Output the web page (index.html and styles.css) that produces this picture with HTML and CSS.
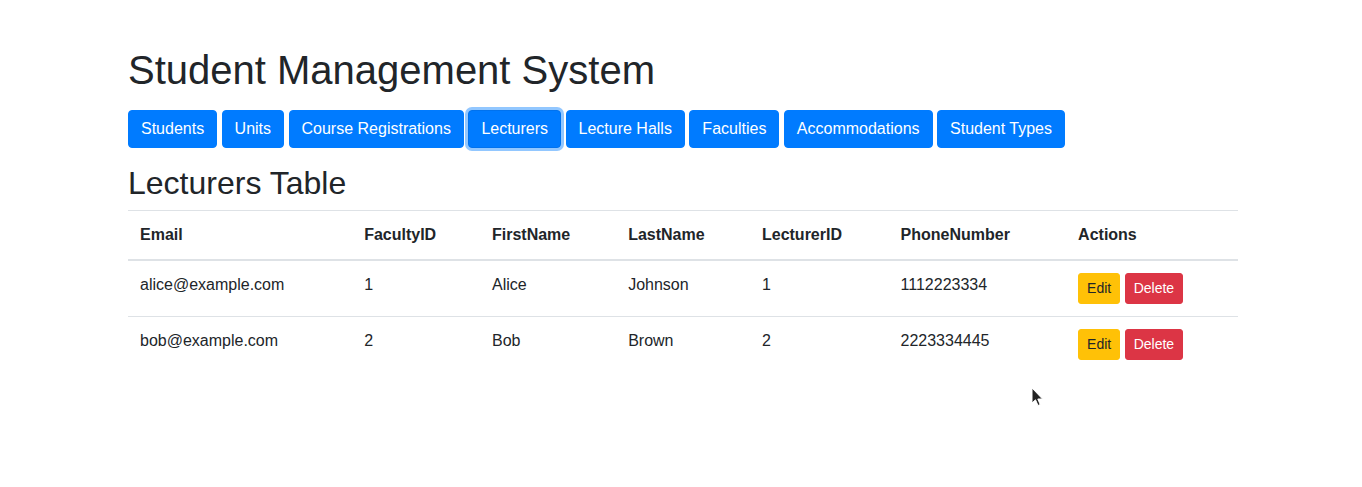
FILE: index.html
```html
<!DOCTYPE html>
<html lang="en">
<head>
<meta charset="utf-8">
<title>Student Management System</title>
<link rel="stylesheet" href="styles.css">
</head>
<body>
<div class="container">
  <h1 class="title">Student Management System</h1>
  <div class="nav">
    <button class="btn btn-primary">Students</button>
    <button class="btn btn-primary">Units</button>
    <button class="btn btn-primary">Course Registrations</button>
    <button class="btn btn-primary is-focus">Lecturers</button>
    <button class="btn btn-primary">Lecture Halls</button>
    <button class="btn btn-primary">Faculties</button>
    <button class="btn btn-primary">Accommodations</button>
    <button class="btn btn-primary">Student Types</button>
  </div>
  <h2 class="subtitle">Lecturers Table</h2>
  <table class="table">
    <thead>
      <tr>
        <th>Email</th>
        <th>FacultyID</th>
        <th>FirstName</th>
        <th>LastName</th>
        <th>LecturerID</th>
        <th>PhoneNumber</th>
        <th>Actions</th>
      </tr>
    </thead>
    <tbody>
      <tr>
        <td>alice@example.com</td>
        <td>1</td>
        <td>Alice</td>
        <td>Johnson</td>
        <td>1</td>
        <td>1112223334</td>
        <td><button class="btn btn-sm btn-warning">Edit</button> <button class="btn btn-sm btn-danger">Delete</button></td>
      </tr>
      <tr>
        <td>bob@example.com</td>
        <td>2</td>
        <td>Bob</td>
        <td>Brown</td>
        <td>2</td>
        <td>2223334445</td>
        <td><button class="btn btn-sm btn-warning">Edit</button> <button class="btn btn-sm btn-danger">Delete</button></td>
      </tr>
    </tbody>
  </table>
</div>
<svg class="cursor" width="14" height="22" viewBox="0 0 14 22" aria-hidden="true">
  <path d="M1 1 L1 16 L4.5 12.8 L7 18.5 L9.2 17.5 L6.8 12 L11.5 12 Z" fill="#222" stroke="#fff" stroke-width="1"/>
</svg>
</body>
</html>
```

FILE: styles.css
```css
html, body {
  margin: 0;
  padding: 0;
}
body {
  font-family: "Liberation Sans", Arial, Helvetica, sans-serif;
  font-size: 16px;
  line-height: 1.5;
  color: #212529;
  background: #fff;
  position: relative;
  min-height: 487px;
}
.container {
  width: 1110px;
  margin: 0 auto 0 128px;
  padding-top: 46px;
}
.title {
  font-size: 40px;
  font-weight: 500;
  line-height: 1.2;
  margin: 0;
}
.nav {
  margin-top: 16px;
  margin-bottom: 16px;
}
.btn {
  display: inline-block;
  font-family: inherit;
  font-weight: 400;
  font-size: 16px;
  line-height: 1.5;
  padding: 6px 12px;
  border: 1px solid transparent;
  border-radius: 4px;
  vertical-align: middle;
  cursor: pointer;
  margin: 0;
}
.btn-primary {
  color: #fff;
  background-color: #007bff;
  border-color: #007bff;
}
.btn-primary.is-focus {
  background-color: #007bff;
  border-color: #0072ee;
  box-shadow: 0 0 0 3px rgba(38, 143, 255, 0.5);
}
.subtitle {
  font-size: 32px;
  font-weight: 500;
  line-height: 1.2;
  margin: 0 0 8px 0;
}
.table {
  width: 100%;
  border-collapse: collapse;
  color: #212529;
}
.table th,
.table td {
  padding: 12px;
  vertical-align: top;
  border-top: 1px solid #dee2e6;
  text-align: left;
}
.table th {
  font-weight: 700;
}
.table thead th {
  vertical-align: bottom;
  border-bottom: 2px solid #dee2e6;
}
.btn-sm {
  padding: 4px 8px;
  font-size: 14px;
  line-height: 1.5;
  border-radius: 3px;
}
.btn-warning {
  color: #212529;
  background-color: #ffc107;
  border-color: #ffc107;
}
.btn-danger {
  color: #fff;
  background-color: #dc3545;
  border-color: #dc3545;
}
.cursor {
  position: absolute;
  left: 1031px;
  top: 387px;
}
```
